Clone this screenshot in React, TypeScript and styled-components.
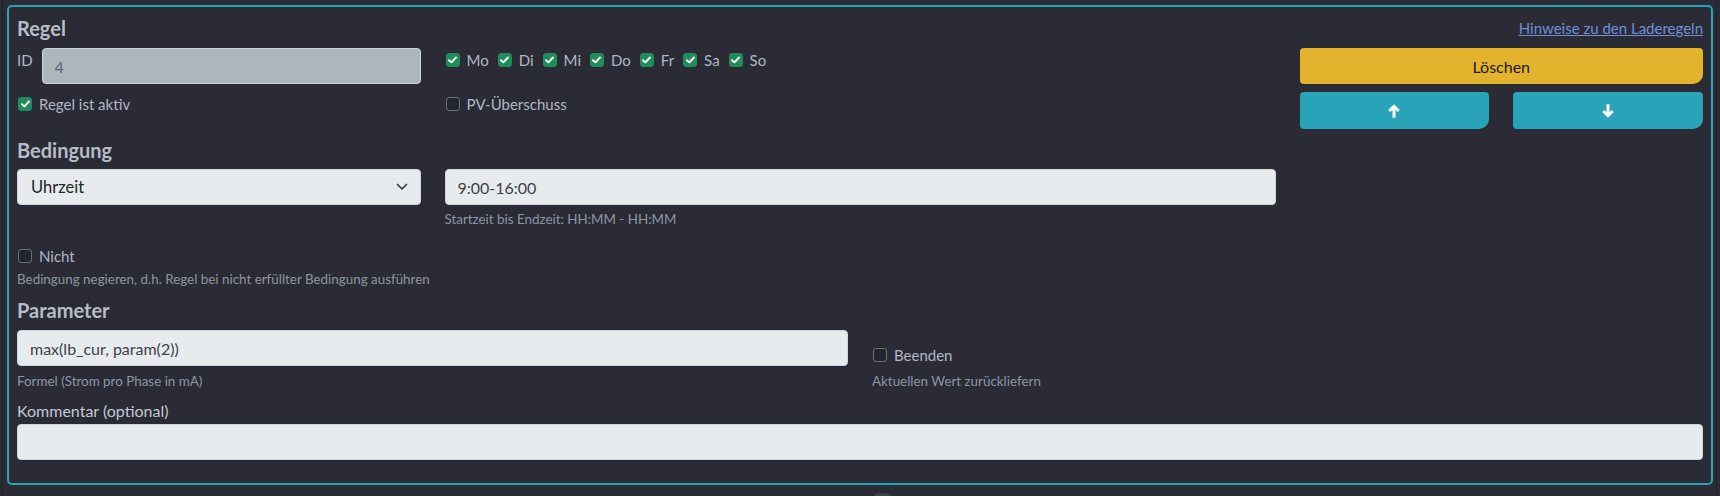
import styled, { createGlobalStyle } from 'styled-components'

const GlobalStyle = createGlobalStyle`
  html, body {
    margin: 0;
    padding: 0;
    background: #2b2b36;
  }
  body {
    font-family: "Segoe UI", Lato, "Liberation Sans", sans-serif;
    font-size: 15px;
    line-height: 24px;
    color: #aeb8c4;
  }
  * {
    box-sizing: border-box;
  }
`

const Frame = styled.div`
  margin-left: 2px;
  width: 1715px;
  height: 496px;
  overflow: hidden;
  padding: 5px 3px 0 4px;
  border-left: 1px solid #1f2028;
  border-right: 1px solid #1f2028;
`

const Card = styled.div`
  border: 2px solid #29a3b7;
  border-radius: 5px;
  padding: 9px 8px 23px 8px;
`

const Grid = styled.div<{ $align?: string }>`
  display: grid;
  grid-template-columns: repeat(12, 1fr);
  column-gap: 24px;
  row-gap: 8px;
  align-items: ${(p) => p.$align || 'start'};
`

const Cell = styled.div<{ $span: number; $right?: boolean }>`
  grid-column: span ${(p) => p.$span};
  display: flex;
  flex-direction: column;
  align-items: ${(p) => (p.$right ? 'flex-end' : 'stretch')};
  min-width: 0;
`

const Heading = styled.h5<{ $top?: number; $bottom?: number }>`
  margin: ${(p) => p.$top ?? 0}px 0 ${(p) => p.$bottom ?? 7}px 0;
  font-size: 20px;
  line-height: 24px;
  font-weight: 700;
  color: #b5bdc7;
`

const HelpLink = styled.a`
  color: #6e8fd8;
  text-decoration: underline;
  font-size: 15px;
  line-height: 24px;
  cursor: pointer;
`

const IdRow = styled.div`
  display: flex;
  align-items: flex-start;
  gap: 9px;
`

const IdLabel = styled.span`
  line-height: 24px;
  color: #aeb8c4;
`

const Input = styled.input<{ $disabled?: boolean }>`
  width: 100%;
  height: 36px;
  padding: 0 12px;
  font-family: inherit;
  font-size: 16px;
  border-radius: 4px;
  border: 1px solid ${(p) => (p.$disabled ? '#cfd4d9' : '#d0d5da')};
  background: ${(p) => (p.$disabled ? '#adb5bd' : '#e8ebee')};
  color: ${(p) => (p.$disabled ? '#5d6571' : '#3d4249')};
  outline: none;
`

const SelectBox = styled.div`
  display: flex;
  align-items: center;
  justify-content: space-between;
  height: 36px;
  padding: 0 12px 0 13px;
  border-radius: 4px;
  border: 1px solid #d0d5da;
  background: #e8ebee;
  color: #212529;
  font-size: 16.5px;
`

const Checks = styled.div`
  display: flex;
  flex-wrap: wrap;
  column-gap: 8px;
  line-height: 24px;
`

const CheckLabel = styled.label`
  display: inline-flex;
  align-items: center;
  gap: 7px;
  line-height: 24px;
  color: #aeb8c4;
  white-space: nowrap;
`

const Box = styled.span<{ $on?: boolean }>`
  display: inline-flex;
  align-items: center;
  justify-content: center;
  flex: none;
  width: 14px;
  height: 14px;
  margin-left: 1px;
  border-radius: 3px;
  background: ${(p) => (p.$on ? '#1e8c5b' : '#23252d')};
  border: 1px solid ${(p) => (p.$on ? '#1e8c5b' : '#6a707b')};
`

const Help = styled.div<{ $top?: number }>`
  margin-top: ${(p) => p.$top ?? 4}px;
  font-size: 13.4px;
  line-height: 21px;
  color: #8b95a2;
`

const Block = styled.div<{ $top?: number }>`
  display: flex;
  flex-direction: column;
  align-items: flex-start;
  margin-top: ${(p) => p.$top || 0}px;
`

const Button = styled.button<{ $color: string }>`
  height: 36px;
  width: 100%;
  border: none;
  border-radius: 4px 4px 10px 4px;
  background: ${(p) => p.$color};
  color: #1a1a1a;
  font-family: inherit;
  font-size: 16px;
  display: flex;
  align-items: center;
  justify-content: center;
`

const ButtonPair = styled.div`
  display: grid;
  grid-template-columns: 1fr 1fr;
  column-gap: 24px;

  & > button {
    height: 37px;
  }
`

const FieldLabel = styled.div`
  margin: 7px 0 1px 0;
  font-size: 16px;
  line-height: 24px;
  color: #c2c9d1;
`

const NextItem = styled.div`
  margin: 8px 0 0 866px;
  width: 18px;
  height: 14px;
  border-radius: 6px;
  background: #3b4150;
`

const Tick = () => (
  <svg width="9" height="8" viewBox="0 0 9 8">
    <path d="M1 4.2 L3.4 6.4 L8 1.5" fill="none" stroke="#fff" strokeWidth="1.9" strokeLinecap="round" strokeLinejoin="round" />
  </svg>
)

const Check = ({ on, children }: { on?: boolean; children: string }) => (
  <CheckLabel>
    <Box $on={on}>{on && <Tick />}</Box>
    {children}
  </CheckLabel>
)

const Chevron = () => (
  <svg width="12" height="8" viewBox="0 0 12 8">
    <path d="M1.5 1.5 L6 6 L10.5 1.5" fill="none" stroke="#343a40" strokeWidth="1.7" strokeLinecap="round" strokeLinejoin="round" />
  </svg>
)

const Arrow = ({ down }: { down?: boolean }) => (
  <svg width="12" height="14" viewBox="0 0 12 14" style={down ? { transform: 'rotate(180deg)' } : undefined}>
    <path d="M6 0.3 L11.8 6.1 L9.8 8.1 L7.5 5.8 V13.7 H4.5 V5.8 L2.2 8.1 L0.2 6.1 Z" fill="#fff" />
  </svg>
)

const days = ['Mo', 'Di', 'Mi', 'Do', 'Fr', 'Sa', 'So']

export default function App() {
  return (
    <>
      <GlobalStyle />
      <Frame>
        <Card>
          <Grid>
            <Cell $span={9}>
              <Heading $bottom={0}>Regel</Heading>
            </Cell>
            <Cell $span={3} $right>
              <HelpLink>Hinweise zu den Laderegeln</HelpLink>
            </Cell>

            <Cell $span={3}>
              <IdRow>
                <IdLabel>ID</IdLabel>
                <Input $disabled value="4" readOnly />
              </IdRow>
            </Cell>
            <Cell $span={6}>
              <Checks>
                {days.map((d) => (
                  <Check key={d} on>
                    {d}
                  </Check>
                ))}
              </Checks>
            </Cell>
            <Cell $span={3}>
              <Button $color="#e3b32e">Löschen</Button>
            </Cell>

            <Cell $span={3}>
              <Check on>Regel ist aktiv</Check>
            </Cell>
            <Cell $span={6}>
              <Check>PV-Überschuss</Check>
            </Cell>
            <Cell $span={3}>
              <ButtonPair>
                <Button $color="#29a3b7">
                  <Arrow />
                </Button>
                <Button $color="#29a3b7">
                  <Arrow down />
                </Button>
              </ButtonPair>
            </Cell>
          </Grid>

          <Heading $top={9}>Bedingung</Heading>
          <Grid>
            <Cell $span={3}>
              <SelectBox>
                Uhrzeit
                <Chevron />
              </SelectBox>
            </Cell>
            <Cell $span={6}>
              <Input value="9:00-16:00" readOnly />
              <Help>Startzeit bis Endzeit: HH:MM - HH:MM</Help>
            </Cell>
          </Grid>

          <Block $top={14}>
            <Check>Nicht</Check>
            <Help $top={1}>Bedingung negieren, d.h. Regel bei nicht erfüllter Bedingung ausführen</Help>
          </Block>

          <Heading $top={8} $bottom={8}>Parameter</Heading>
          <Grid $align="end">
            <Cell $span={6}>
              <Input value="max(lb_cur, param(2))" readOnly />
              <Help $top={5}>Formel (Strom pro Phase in mA)</Help>
            </Cell>
            <Cell $span={6}>
              <Block>
                <Check>Beenden</Check>
                <Help $top={4}>Aktuellen Wert zurückliefern</Help>
              </Block>
            </Cell>
          </Grid>

          <FieldLabel>Kommentar (optional)</FieldLabel>
          <Input value="" readOnly />
        </Card>
        <NextItem />
      </Frame>
    </>
  )
}
